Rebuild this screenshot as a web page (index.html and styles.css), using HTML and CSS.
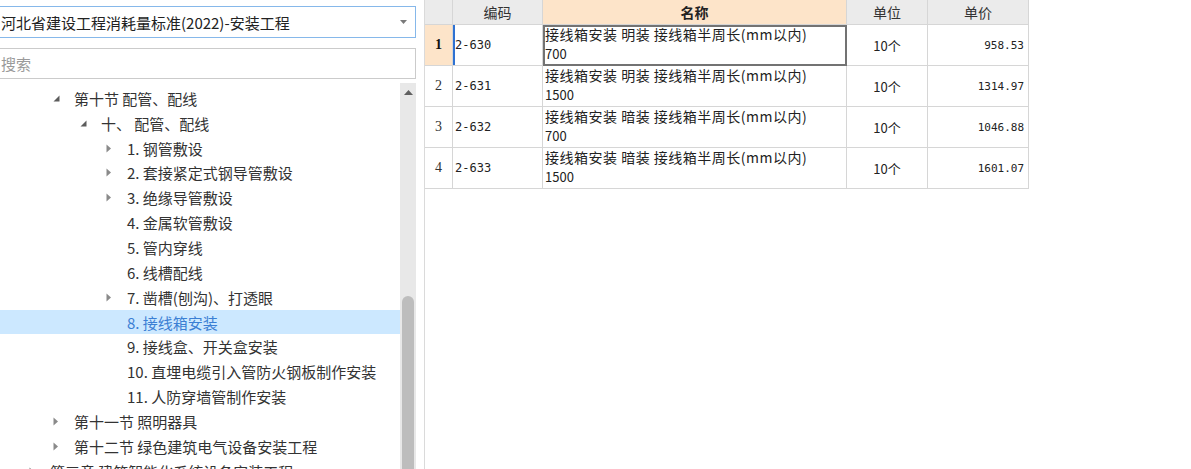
FILE: index.html
```html
<!DOCTYPE html>
<html lang="zh-CN">
<head>
<meta charset="utf-8">
<title>定额库</title>
<link rel="stylesheet" href="styles.css">
</head>
<body>
<div class="app">
  <aside class="lib">
    <div class="select">
      <span class="select-text">河北省建设工程消耗量标准(2022)-安装工程</span>
      <svg class="caret" width="7" height="4" viewBox="0 0 7 4"><polygon points="0,0 7,0 3.5,4" fill="#7a7a7a"/></svg>
    </div>
    <div class="search">搜索</div>
    <div class="tree-wrap">
      <div class="tree">
        <div class="node l2"><span class="tw"><svg width="7" height="7" viewBox="0 0 7 7"><polygon points="6.5,0.5 6.5,6.5 0.5,6.5" fill="#5c5c5c"/></svg></span><span class="lbl">第十节 配管、配线</span></div>
        <div class="node l3"><span class="tw"><svg width="7" height="7" viewBox="0 0 7 7"><polygon points="6.5,0.5 6.5,6.5 0.5,6.5" fill="#5c5c5c"/></svg></span><span class="lbl">十、 配管、配线</span></div>
        <div class="node l4"><span class="tw"><svg width="6" height="9" viewBox="0 0 6 9"><polygon points="0.5,0.5 5,4.5 0.5,8.5" fill="#8a8a8a"/></svg></span><span class="lbl">1. 钢管敷设</span></div>
        <div class="node l4"><span class="tw"><svg width="6" height="9" viewBox="0 0 6 9"><polygon points="0.5,0.5 5,4.5 0.5,8.5" fill="#8a8a8a"/></svg></span><span class="lbl">2. 套接紧定式钢导管敷设</span></div>
        <div class="node l4"><span class="tw"><svg width="6" height="9" viewBox="0 0 6 9"><polygon points="0.5,0.5 5,4.5 0.5,8.5" fill="#8a8a8a"/></svg></span><span class="lbl">3. 绝缘导管敷设</span></div>
        <div class="node l4"><span class="tw"></span><span class="lbl">4. 金属软管敷设</span></div>
        <div class="node l4"><span class="tw"></span><span class="lbl">5. 管内穿线</span></div>
        <div class="node l4"><span class="tw"></span><span class="lbl">6. 线槽配线</span></div>
        <div class="node l4"><span class="tw"><svg width="6" height="9" viewBox="0 0 6 9"><polygon points="0.5,0.5 5,4.5 0.5,8.5" fill="#8a8a8a"/></svg></span><span class="lbl">7. 凿槽(刨沟)、打透眼</span></div>
        <div class="node l4 selected"><span class="tw"></span><span class="lbl">8. 接线箱安装</span></div>
        <div class="node l4"><span class="tw"></span><span class="lbl">9. 接线盒、开关盒安装</span></div>
        <div class="node l4"><span class="tw"></span><span class="lbl">10. 直埋电缆引入管防火钢板制作安装</span></div>
        <div class="node l4"><span class="tw"></span><span class="lbl">11. 人防穿墙管制作安装</span></div>
        <div class="node l2"><span class="tw"><svg width="6" height="9" viewBox="0 0 6 9"><polygon points="0.5,0.5 5,4.5 0.5,8.5" fill="#8a8a8a"/></svg></span><span class="lbl">第十一节 照明器具</span></div>
        <div class="node l2"><span class="tw"><svg width="6" height="9" viewBox="0 0 6 9"><polygon points="0.5,0.5 5,4.5 0.5,8.5" fill="#8a8a8a"/></svg></span><span class="lbl">第十二节 绿色建筑电气设备安装工程</span></div>
        <div class="node l1"><span class="tw"><svg width="6" height="9" viewBox="0 0 6 9"><polygon points="0.5,0.5 5,4.5 0.5,8.5" fill="#8a8a8a"/></svg></span><span class="lbl">第三章 建筑智能化系统设备安装工程</span></div>
      </div>
      <div class="vscroll">
        <div class="arrow-up"><svg width="9" height="5" viewBox="0 0 9 5"><polygon points="0,5 4.5,0 9,5" fill="#606060"/></svg></div>
        <div class="thumb"></div>
      </div>
    </div>
  </aside>

  <main class="grid-pane">
    <div class="grid">
      <div class="hd num"></div>
      <div class="hd">编码</div>
      <div class="hd hd-name">名称</div>
      <div class="hd">单位</div>
      <div class="hd">单价</div>

      <div class="c num cur">1</div>
      <div class="c code active">2-630</div>
      <div class="c name editing">接线箱安装 明装 接线箱半周长(mm以内)<br><span class="spec">700</span></div>
      <div class="c unit">10个</div>
      <div class="c price">958.53</div>

      <div class="c num">2</div>
      <div class="c code">2-631</div>
      <div class="c name">接线箱安装 明装 接线箱半周长(mm以内)<br><span class="spec">1500</span></div>
      <div class="c unit">10个</div>
      <div class="c price">1314.97</div>

      <div class="c num">3</div>
      <div class="c code">2-632</div>
      <div class="c name">接线箱安装 暗装 接线箱半周长(mm以内)<br><span class="spec">700</span></div>
      <div class="c unit">10个</div>
      <div class="c price">1046.88</div>

      <div class="c num">4</div>
      <div class="c code">2-633</div>
      <div class="c name">接线箱安装 暗装 接线箱半周长(mm以内)<br><span class="spec">1500</span></div>
      <div class="c unit">10个</div>
      <div class="c price">1601.07</div>
    </div>
  </main>
</div>
</body>
</html>
```

FILE: styles.css
```css
* { box-sizing: border-box; }
html, body {
  margin: 0;
  padding: 0;
  width: 1191px;
  height: 469px;
  overflow: hidden;
  background: #ffffff;
}
body {
  font-family: "Noto Sans CJK SC", "Noto Sans", sans-serif;
  color: #333;
}
.app {
  display: flex;
  height: 469px;
}

/* left library panel */
.lib {
  width: 420px;
  margin-left: -4px;
  display: flex;
  flex-direction: column;
  flex: none;
}
.select {
  margin-top: 6px;
  height: 32px;
  border: 1px solid #86b8ea;
  display: flex;
  align-items: center;
  padding: 0 8px 0 4px;
  font-size: 15px;
  color: #222;
}
.select-text { flex: 1; white-space: nowrap; }
.caret { flex: none; margin-top: -1px; }
.search {
  margin-top: 10px;
  height: 31px;
  border: 1px solid #cbcbcb;
  padding-left: 4px;
  font-size: 15px;
  color: #9a9a9a;
  display: flex;
  align-items: center;
}
.tree-wrap {
  margin-top: 4px;
  flex: 1;
  display: flex;
  min-height: 0;
  overflow: hidden;
}
.tree {
  flex: 1;
  padding-top: 3px;
  font-size: 15px;
  color: #333;
}
.node {
  height: 24.85px;
  display: flex;
  align-items: center;
  white-space: nowrap;
}
.node.selected { background: #cce8ff; color: #3b7fd4; }
.node.l1 { padding-left: 33px; }
.node.l2 { padding-left: 57px; }
.node.l3 { padding-left: 84px; }
.node.l4 { padding-left: 110px; }
.tw {
  width: 21px;
  flex: none;
  display: flex;
  align-items: center;
}
.tw svg { display: block; }
.lbl { line-height: 1; }

.vscroll {
  width: 16px;
  flex: none;
  background: #e8e8e8;
  display: flex;
  flex-direction: column;
  align-items: center;
}
.arrow-up {
  height: 12px;
  display: flex;
  align-items: flex-end;
  justify-content: center;
}
.thumb {
  margin-top: 201px;
  width: 12px;
  flex: 1;
  background: #bdbdbd;
  border-radius: 6px 6px 0 0;
}

/* right grid */
.grid-pane {
  margin-left: 8px;
  border-left: 1px solid #dadada;
  flex: 1;
}
.grid {
  display: grid;
  grid-template-columns: 28px 90px 304px 81px 101px;
  grid-template-rows: 25px repeat(4, 41px);
  width: 604px;
}
.hd {
  background: #ebebeb;
  border-right: 1px solid #d6d6d6;
  border-bottom: 1px solid #d6d6d6;
  display: flex;
  align-items: center;
  justify-content: center;
  font-size: 14px;
  color: #333;
}
.hd-name { background: #fde4c9; font-weight: bold; color: #222; }
.c {
  border-right: 1px solid #d6d6d6;
  border-bottom: 1px solid #d6d6d6;
  font-size: 13px;
  color: #222;
  display: flex;
  align-items: center;
  white-space: nowrap;
}
.num {
  justify-content: center;
  font-family: "Liberation Serif", serif;
  font-size: 14px;
  color: #333;
  background: #ffffff;
}
.hd.num { background: #ebebeb; }
.num.cur { background: #fde4c9; font-weight: bold; color: #111; }
.code {
  padding-left: 2px;
  font-family: "DejaVu Sans Mono", "Noto Sans CJK SC", monospace;
  font-size: 12px;
}
.code.active { box-shadow: inset 2px 0 0 #2f72d2; }
.name {
  display: block;
  padding: 0 2px;
  line-height: 19px;
  font-size: 14px;
  letter-spacing: 0.5px;
}
.spec { font-size: 13px; letter-spacing: 0; }
.name.editing {
  outline: 2px solid #737373;
  outline-offset: -2px;
}
.unit { justify-content: center; font-size: 13px; }
.price {
  justify-content: flex-end;
  padding-right: 4px;
  font-family: "DejaVu Sans Mono", monospace;
  font-size: 11px;
}
```
